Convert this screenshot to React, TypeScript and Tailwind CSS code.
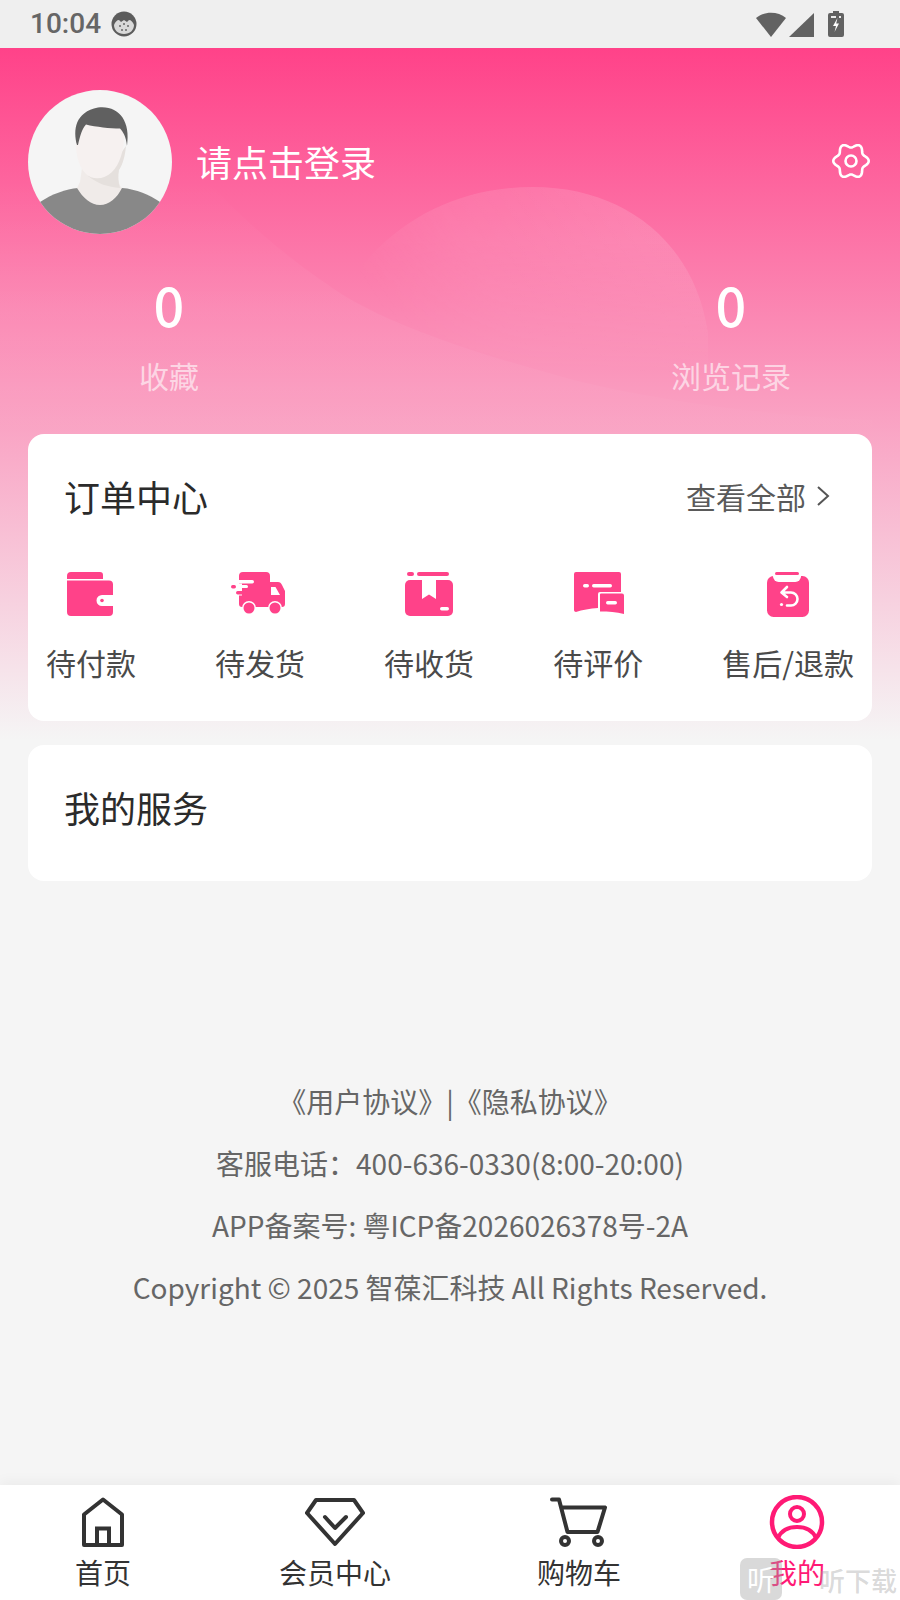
import React from 'react';

const PINK = '#ff4289';

const gearPath = () => {
  const pts: string[] = [];
  for (let i = 0; i <= 120; i++) {
    const t = (i / 120) * Math.PI * 2;
    const r = 15.6 + 2.1 * Math.cos(6 * t);
    pts.push(`${(19 + r * Math.cos(t)).toFixed(2)} ${(18 + r * Math.sin(t)).toFixed(2)}`);
  }
  return 'M' + pts.join(' L') + 'Z';
};

const StatusBar = () => (
  <div className="flex h-[48px] shrink-0 items-center justify-between bg-[#efefef] pl-[30px] pr-[56px]">
    <div className="flex items-center gap-[10px]">
      <span className="font-['Roboto',sans-serif] text-[28px] font-medium leading-[48px] text-[#666]">10:04</span>
      <svg width="26" height="26" viewBox="0 0 26 26">
        <circle cx="13" cy="13" r="12.5" fill="#5c5c5c" />
        <path d="M3 14c1-3 3-5 5-5l2 2 3-2 3 2 2-2c2 0 4 2 5 5 0 5-4 9-10 9S3 19 3 14z" fill="#d9d9d9" />
        <circle cx="9" cy="15" r="1" fill="#666" />
        <circle cx="13" cy="13" r="1" fill="#666" />
        <circle cx="17" cy="15" r="1" fill="#666" />
        <circle cx="11" cy="19" r="1" fill="#666" />
        <circle cx="15" cy="19" r="1" fill="#666" />
      </svg>
    </div>
    <div className="flex items-center">
      <svg width="30" height="25" viewBox="0 0 30 25">
        <path d="M0 6C8-1 22-1 30 6L15 25Z" fill="#626262" />
      </svg>
      <svg className="ml-[3px]" width="25" height="25" viewBox="0 0 25 25">
        <path d="M25 1V25H0Z" fill="#626262" />
      </svg>
      <svg className="ml-[14px]" width="16" height="26" viewBox="0 0 16 26">
        <path d="M5 0h6v2h3a2 2 0 0 1 2 2v20a2 2 0 0 1-2 2H2a2 2 0 0 1-2-2V4a2 2 0 0 1 2-2h3z" fill="#626262" />
        <path d="M9.5 7 5 15h3l-1.5 6L11 12.500H8.200z" fill="#fff" />
        <path d="M3 5h5v2H3zM11 5h2v2h-2z" fill="#eee" />
      </svg>
    </div>
  </div>
);

const Avatar = () => (
  <svg width="144" height="144" viewBox="0 0 144 144" className="shrink-0">
    <defs>
      <clipPath id="avatar-clip">
        <circle cx="72" cy="72" r="72" />
      </clipPath>
    </defs>
    <g clipPath="url(#avatar-clip)">
      <rect width="144" height="144" fill="#f5f5f5" />
      <path d="M12 112C24 104 38 99 50 98L94 98C108 99 122 105 132 112L144 144H0Z" fill="#888888" />
      <path d="M54 78L52 92C50 95 50 97 49 98C55 108 63 115 72 115C81 115 89 108 94 98C92 96 91 94 90 88L90 76Z" fill="#f0ebe9" />
      <path d="M60 86C70 94 80 97 92 98C90 92 90 86 91 80C95 74 97 66 98 56L88 70Z" fill="#e5e0dd" />
      <path d="M48 46C47 62 50 76 58 84C64 90 76 90 84 82C92 74 96 60 96 46C96 36 84 28 72 28C60 28 48 36 48 46Z" fill="#f6f1f0" />
      <path d="M49 55C45 40 47 22 70 17.500C90 15 103 30 99 56C98 46 95 42 92 38.500C82 38.500 68 37 58 34.500C54 39 52 46 50 55Z" fill="#606060" />
    </g>
  </svg>
);

const Backdrop = () => (
  <svg className="absolute left-0 top-0" width="900" height="700" viewBox="0 0 900 700">
    <defs>
      <linearGradient id="blob-fill" gradientUnits="userSpaceOnUse" x1="620" y1="150" x2="400" y2="290">
        <stop offset="0" stopColor="#ffffff" stopOpacity="0.14" />
        <stop offset="0.6" stopColor="#ffffff" stopOpacity="0.09" />
        <stop offset="1" stopColor="#ffffff" stopOpacity="0" />
      </linearGradient>
      <linearGradient id="blob-fade" gradientUnits="userSpaceOnUse" x1="0" y1="190" x2="0" y2="330">
        <stop offset="0" stopColor="#ffffff" />
        <stop offset="1" stopColor="#000000" />
      </linearGradient>
      <mask id="blob-mask">
        <rect width="900" height="700" fill="url(#blob-fade)" />
      </mask>
      <linearGradient id="wave-fill" gradientUnits="userSpaceOnUse" x1="0" y1="130" x2="0" y2="390">
        <stop offset="0" stopColor="#ffffff" stopOpacity="0" />
        <stop offset="0.5" stopColor="#ffffff" stopOpacity="0.05" />
        <stop offset="0.8" stopColor="#ffffff" stopOpacity="0.03" />
        <stop offset="1" stopColor="#ffffff" stopOpacity="0" />
      </linearGradient>
    </defs>
    <path
      d="M340 250C380 180 450 139 533 139C625 139 695 195 708 285L708 362C640 349 540 325 440 295C400 283 370 265 340 245Z"
      fill="url(#blob-fill)"
      mask="url(#blob-mask)"
    />
    <path d="M167 92C215 140 250 185 340 245C400 283 500 312 574 332C640 349 760 368 872 372V400H0V92Z" fill="url(#wave-fill)" />
  </svg>
);

const WalletIcon = () => (
  <svg width="48" height="48" viewBox="0 0 48 48">
    <path d="M1 6a4 4 0 0 1 4-4h29a3 3 0 0 1 3 3v4H1z" fill={PINK} />
    <path d="M1 10.500H43a4 4 0 0 1 4 4V25H36a5.500 5.500 0 0 0 0 11H47v6a4 4 0 0 1-4 4H5a4 4 0 0 1-4-4z" fill={PINK} />
    <circle cx="36" cy="30.500" r="1.800" fill={PINK} />
  </svg>
);

const TruckIcon = () => (
  <svg width="60" height="48" viewBox="0 0 60 48">
    <path d="M15 2H38a4 4 0 0 1 4 4V12H50C52 12 53 13 54 15L57 21V34a3 3 0 0 1-3 3H14a3 3 0 0 1-3-3V6a4 4 0 0 1 4-4z" fill={PINK} />
    <path d="M43 17H47.500L52 25H43z" fill="#fff" />
    <rect x="7" y="10" width="19" height="3.500" rx="1.700" fill="#fff" />
    <rect x="5" y="13.500" width="9" height="12" fill="#fff" />
    <rect x="8" y="21" width="11" height="3.500" rx="1.700" fill={PINK} />
    <rect x="3" y="15" width="5" height="3.500" rx="1.700" fill={PINK} />
    <rect x="11" y="15" width="9" height="3" rx="1.500" fill="#fff" />
    <circle cx="21" cy="38" r="7" fill="#fff" />
    <circle cx="47" cy="38" r="7" fill="#fff" />
    <circle cx="21" cy="38" r="5.500" fill={PINK} />
    <circle cx="47" cy="38" r="5.500" fill={PINK} />
  </svg>
);

const BoxIcon = () => (
  <svg width="48" height="48" viewBox="0 0 48 48">
    <rect x="2" y="2" width="7" height="4" rx="2" fill={PINK} />
    <rect x="12" y="2" width="32" height="4" rx="2" fill={PINK} />
    <path d="M5 10H43a5 5 0 0 1 5 5V41a5 5 0 0 1-5 5H5a5 5 0 0 1-5-5V15a5 5 0 0 1 5-5z" fill={PINK} />
    <path d="M17 10H31V29L24 24.500L17 29z" fill="#fff" />
    <rect x="35" y="37" width="9" height="3.500" rx="1.700" fill="#fff" />
  </svg>
);

const CommentIcon = () => (
  <svg width="50" height="48" viewBox="0 0 50 48">
    <path d="M2 2H45a2 2 0 0 1 2 2V22H26a2 2 0 0 0-2 2V38C16 38.500 8 40 2 42C1 42 0 41 0 40V4a2 2 0 0 1 2-2z" fill={PINK} />
    <path d="M27 23.500H48a2 2 0 0 1 2 2V44C42 42 35 41.500 26 41.500V24.500a1 1 0 0 1 1-1z" fill={PINK} />
    <rect x="9" y="14" width="6" height="3.500" rx="1.700" fill="#fff" />
    <rect x="18" y="14" width="20" height="3.500" rx="1.700" fill="#fff" />
    <rect x="32" y="31" width="11" height="3.500" rx="1.700" fill="#fff" />
  </svg>
);

const ReturnIcon = () => (
  <svg width="42" height="48" viewBox="0 0 42 48">
    <rect x="0" y="6" width="42" height="41" rx="6.500" fill={PINK} />
    <rect x="6" y="0.500" width="28" height="11.500" rx="5.700" fill="#fff" />
    <rect x="8" y="2" width="24" height="3" rx="1.500" fill={PINK} />
    <path d="M20 17L14.500 22.500L20 27M15 22.500H24a6.500 6.500 0 0 1 0 13H20" fill="none" stroke="#fff" strokeWidth="2.600" strokeLinecap="round" strokeLinejoin="round" />
    <circle cx="14.500" cy="34.500" r="1.600" fill="#fff" />
  </svg>
);

const orderItems = [
  { label: '待付款', icon: <WalletIcon />, iconClass: 'mr-[3px]' },
  { label: '待发货', icon: <TruckIcon />, iconClass: 'mr-[5px]' },
  { label: '待收货', icon: <BoxIcon />, iconClass: '' },
  { label: '待评价', icon: <CommentIcon />, iconClass: 'ml-[2px]' },
  { label: '售后/退款', icon: <ReturnIcon />, iconClass: '' },
];

const HomeIcon = () => (
  <svg width="44" height="52" viewBox="0 0 44 52">
    <path d="M22 3.500L41 18.500V49H3V18.500Z" fill="none" stroke="#333" strokeWidth="4" strokeLinejoin="round" />
    <path d="M16 48V32.500H28V48" fill="none" stroke="#333" strokeWidth="4" />
  </svg>
);

const DiamondIcon = () => (
  <svg width="60" height="50" viewBox="0 0 60 50">
    <path d="M11 3H49L58 16L30 47L2 16Z" fill="none" stroke="#333" strokeWidth="4" strokeLinejoin="round" />
    <path d="M20 20L30 31L41 20" fill="none" stroke="#333" strokeWidth="4" strokeLinecap="round" strokeLinejoin="round" />
  </svg>
);

const CartIcon = () => (
  <svg width="58" height="50" viewBox="0 0 58 50">
    <path d="M2 2.500H9L17.500 35H47.500L55 10.500H11" fill="none" stroke="#333" strokeWidth="4" strokeLinecap="round" strokeLinejoin="round" />
    <circle cx="15" cy="44" r="4" fill="none" stroke="#333" strokeWidth="4" />
    <circle cx="48" cy="44" r="4" fill="none" stroke="#333" strokeWidth="4" />
  </svg>
);

const UserIcon = () => (
  <svg width="56" height="54" viewBox="0 0 56 54">
    <circle cx="28" cy="27" r="25" fill="none" stroke="#ff1a75" strokeWidth="4.500" />
    <circle cx="28" cy="19" r="7" fill="none" stroke="#ff1a75" strokeWidth="4" />
    <path d="M9 43C13 34 20 32 28 32C36 32 43 34 47 43" fill="none" stroke="#ff1a75" strokeWidth="4" />
  </svg>
);

const navItems = [
  { label: '首页', icon: <HomeIcon />, active: false, spacing: 'ml-[75px]' },
  { label: '会员中心', icon: <DiamondIcon />, active: false, spacing: 'ml-[148px]' },
  { label: '购物车', icon: <CartIcon />, active: false, spacing: 'ml-[146px]' },
  { label: '我的', icon: <UserIcon />, active: true, spacing: 'ml-[148px]' },
];

export default function App() {
  return (
    <div className="relative flex h-[1600px] w-[900px] flex-col overflow-hidden bg-[#f5f5f5] font-['Noto_Sans_CJK_SC','Noto_Sans',sans-serif]">
      <StatusBar />

      <main className="relative flex-1 bg-[linear-gradient(180deg,#ff4289_0px,#f5f5f5_692px)]">
        <Backdrop />
        <div className="relative">
          <div className="flex items-center pl-[28px] pr-[30px] pt-[42px]">
            <Avatar />
            <span className="mb-[2px] ml-[24px] flex-1 text-[36px] leading-[48px] text-white">请点击登录</span>
            <svg width="38" height="36" viewBox="0 0 38 36" className="-mt-[3px]">
              <path d={gearPath()} fill="none" stroke="#fff" strokeWidth="2.600" strokeLinejoin="round" />
              <circle cx="19" cy="18" r="5.500" fill="none" stroke="#fff" strokeWidth="2.600" />
            </svg>
          </div>

          <div className="mt-[40px] flex justify-between px-[109px]">
            <div className="flex w-[120px] flex-col items-center">
              <span className="text-[54px] font-medium leading-[60px] text-white">0</span>
              <span className="mt-[21px] text-[30px] leading-[40px] text-white/60">收藏</span>
            </div>
            <div className="flex w-[120px] flex-col items-center">
              <span className="text-[54px] font-medium leading-[60px] text-white">0</span>
              <span className="mt-[21px] text-[30px] leading-[40px] text-white/60">浏览记录</span>
            </div>
          </div>

          <section className="mx-[28px] mt-[39px] rounded-[16px] bg-white pb-[39px] pt-[42px]">
            <div className="flex items-center justify-between pl-[36px] pr-[41px]">
              <h2 className="text-[36px] font-normal leading-[40px] text-[#2b2b2b]">订单中心</h2>
              <div className="flex items-center gap-[9px] text-[30px] leading-[40px] text-[#5a5a5a]">
                <span>查看全部</span>
                <svg width="16" height="24" viewBox="0 0 16 24">
                  <path d="M3 3L13 12L3 21" fill="none" stroke="#555" strokeWidth="2" />
                </svg>
              </div>
            </div>
            <div className="mt-[54px] flex justify-between px-[18px]">
              {orderItems.map((item) => (
                <div key={item.label} className="flex flex-col items-center">
                  <div className={item.iconClass}>{item.icon}</div>
                  <span className="mt-[24px] text-[30px] leading-[40px] text-[#4a4a4a]">{item.label}</span>
                </div>
              ))}
            </div>
          </section>

          <section className="mx-[28px] mt-[24px] h-[136px] rounded-[16px] bg-white pl-[36px] pt-[42px]">
            <h2 className="text-[36px] font-normal leading-[40px] text-[#2b2b2b]">我的服务</h2>
          </section>

          <footer className="mt-[189px] text-center text-[28px] leading-[62px] text-[#666]">
            <p>《用户协议》|《隐私协议》</p>
            <p>客服电话：400-636-0330(8:00-20:00)</p>
            <p>APP备案号: 粤ICP备2026026378号-2A</p>
            <p>Copyright © 2025 智葆汇科技 All Rights Reserved.</p>
          </footer>
        </div>
      </main>

      <nav className="relative flex h-[115px] shrink-0 bg-white pt-[10px] shadow-[0_-4px_12px_rgba(0,0,0,0.04)]">
        {navItems.map((item) => (
          <div key={item.label} className={`flex flex-col items-center ${item.spacing}`}>
            <div className="flex h-[54px] items-center">{item.icon}</div>
            <span className={`mt-[7px] text-[28px] leading-[32px] ${item.active ? 'text-[#ff1a75]' : 'text-[#333]'}`}>
              {item.label}
            </span>
          </div>
        ))}
      </nav>

      {/* watermark laid over the tab bar */}
      <div className="absolute bottom-0 left-[740px] flex items-end">
        <div className="flex h-[42px] w-[42px] items-center justify-center rounded-[7px] bg-[#a0a0a0]/40 text-[28px] leading-none text-white">
          听
        </div>
        <span className="mb-[2px] ml-[37px] text-[26px] font-medium leading-[36px] text-[#a0a0a0]/40">听下载</span>
      </div>
    </div>
  );
}
